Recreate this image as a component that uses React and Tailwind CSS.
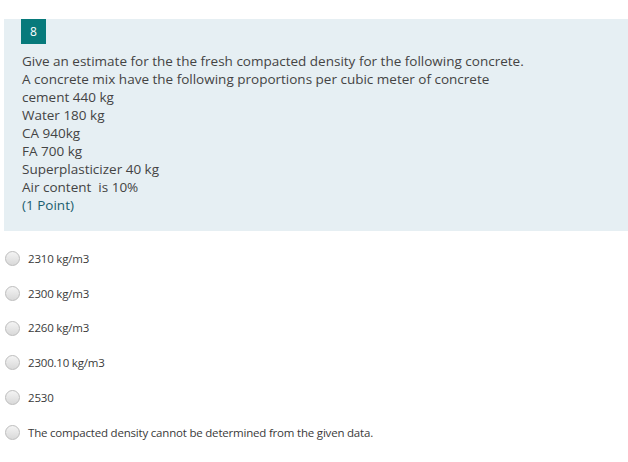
import React from "react";

const lines = [
  "Give an estimate for the the fresh compacted density for the following concrete.",
  "A concrete mix have the following proportions per cubic meter of concrete",
  "cement 440 kg",
  "Water 180 kg",
  "CA 940kg",
  "FA 700 kg",
  "Superplasticizer 40 kg",
  "Air content\u00a0 is 10%",
];

const options = [
  "2310 kg/m3",
  "2300 kg/m3",
  "2260 kg/m3",
  "2300.10 kg/m3",
  "2530",
  "The compacted density cannot be determined from the given data.",
];

function Radio() {
  return (
    <span className="block w-[15px] h-[15px] rounded-full border border-[#bdbdbd] bg-gradient-to-b from-[#f4f4f4] to-[#d9d9d9] shrink-0" />
  );
}

export default function App() {
  return (
    <div className="w-[628px] h-[462px] bg-white pt-[19px]" style={{ fontFamily: '"Segoe UI", "Open Sans", "Noto Sans", sans-serif' }}>
      <div className="ml-[4px] w-[624px] h-[212px] bg-[#e6eff3] pl-[18px] pr-2">
        <div className="ml-[-1px] w-[25px] h-[25px] bg-[#077a7b] text-white text-[12px] flex items-center justify-center">8</div>
        <div className="mt-[8px] text-[13.5px] leading-[18px] text-[#444]">
          {lines.map((l) => (
            <div key={l} className="whitespace-pre">{l}</div>
          ))}
          <div className="text-[#1b5e6e]">(1 Point)</div>
        </div>
      </div>
      <div className="mt-[20px] pl-[5px] flex flex-col gap-[19.8px]">
        {options.map((o) => (
          <div key={o} className="flex items-center h-[15px] gap-[8px]">
            <Radio />
            <span className="text-[11.5px] text-[#3a3a3a] tracking-[-0.2px]">{o}</span>
          </div>
        ))}
      </div>
    </div>
  );
}
